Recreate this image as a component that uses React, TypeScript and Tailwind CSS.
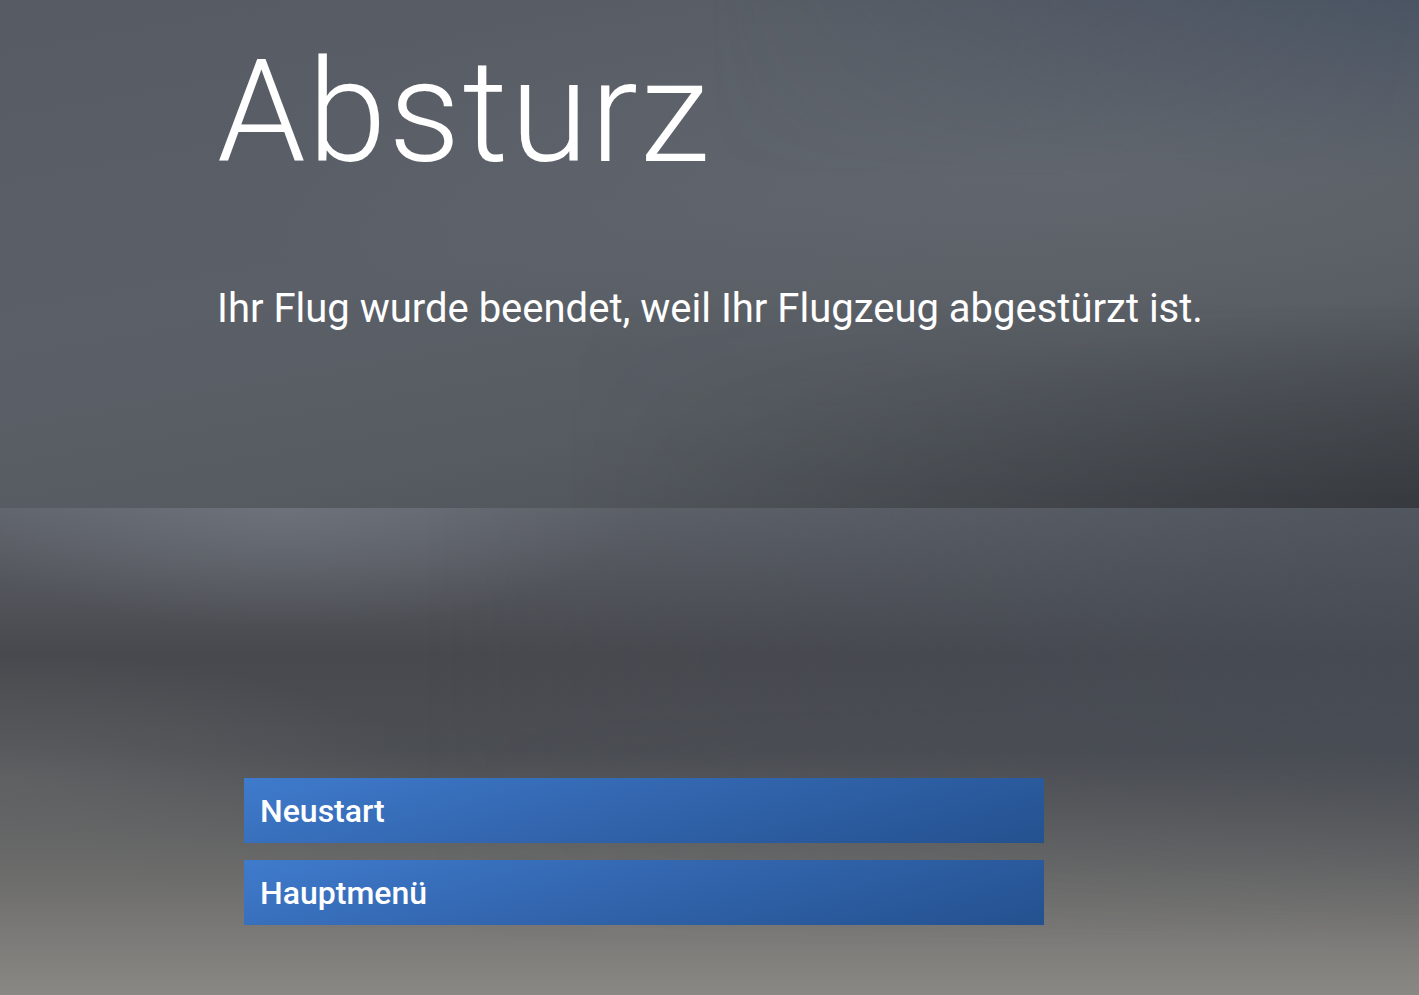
export default function App() {
  const buttons = ["Neustart", "Hauptmenü"];

  return (
    <div className="w-[1419px] h-[995px] overflow-hidden flex flex-col font-['Roboto',sans-serif] text-white">
      {/* Top panel */}
      <section className="relative h-[508px] bg-[linear-gradient(170deg,#575c64_0%,#5b6068_45%,#575c62_70%,#4a4e53_100%)] overflow-hidden">
        <div className="absolute inset-0 bg-[radial-gradient(ellipse_60%_40%_at_75%_35%,rgba(110,115,122,0.35),transparent)]" />
        <div className="absolute inset-0 bg-[linear-gradient(90deg,transparent_40%,rgba(30,33,38,0.45)_100%)] [mask-image:linear-gradient(180deg,transparent_60%,black_100%)]" />
        <div className="absolute inset-0 bg-[linear-gradient(180deg,rgba(55,72,95,0.45)_0%,transparent_35%)] [mask-image:linear-gradient(90deg,transparent_50%,black_100%)]" />
        <div className="relative pl-[217px] pt-[42px]">
          <h1 className="text-[142px] font-light leading-none tracking-[2px]">Absturz</h1>
          <p className="mt-[105px] text-[40px] leading-none">
            Ihr Flug wurde beendet, weil Ihr Flugzeug abgestürzt ist.
          </p>
        </div>
      </section>

      {/* Bottom panel */}
      <section className="relative flex-1 bg-[linear-gradient(180deg,#5f636a_0%,#47494e_30%,#4b4e53_50%,#6b6b6a_75%,#8a8884_100%)] overflow-hidden">
        <div className="absolute inset-0 bg-[radial-gradient(ellipse_25%_25%_at_20%_0%,rgba(130,135,145,0.4),transparent)]" />
        <div className="absolute inset-0 bg-[radial-gradient(ellipse_30%_25%_at_0%_55%,rgba(120,120,118,0.35),transparent)]" />
        <div className="absolute inset-0 bg-[linear-gradient(90deg,transparent_30%,rgba(70,76,86,0.55)_100%)] [mask-image:linear-gradient(180deg,black_40%,transparent_90%)]" />
        <div className="relative pl-[244px] pt-[270px] flex flex-col gap-[17px]">
          {buttons.map((b) => (
            <button
              key={b}
              className="w-[800px] h-[65px] flex items-center pl-[16px] text-left text-[32px] font-medium bg-[linear-gradient(165deg,#3f7bcc_0%,#3468b2_40%,#24518f_100%)]"
            >
              {b}
            </button>
          ))}
        </div>
      </section>
    </div>
  );
}
